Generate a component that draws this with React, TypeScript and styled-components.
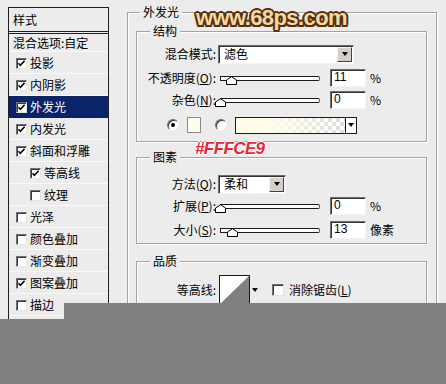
import React from 'react';
import styled, { createGlobalStyle } from 'styled-components';

const Global = createGlobalStyle`
  html, body { margin: 0; padding: 0; background: #ececec; }
  body {
    font-family: "Noto Sans CJK SC", "Noto Sans", "Liberation Sans", sans-serif;
    font-size: 12px;
    color: #000;
    overflow: hidden;
  }
`;

const Page = styled.div`
  position: relative;
  width: 446px;
  height: 384px;
  overflow: hidden;
  display: flex;
  align-items: flex-start;
  background: #ececec;
`;

/* ---------- left list ---------- */
const LeftPanel = styled.div`
  box-sizing: border-box;
  margin: 7px 0 0 8px;
  width: 101px;
  height: 330px;
  border: 1px solid #1e1e1e;
  border-bottom: none;
  display: flex;
  flex-direction: column;
`;

const Header = styled.div`
  height: 23px;
  padding-left: 4px;
  display: flex;
  align-items: center;
  border-bottom: 3px double #1e1e1e;
  line-height: 14px;
`;

const BlendRow = styled.div`
  height: 18px;
  padding-left: 4px;
  display: flex;
  align-items: center;
  line-height: 14px;
  box-shadow: inset 0 -1px 0 #f8f8f8;
`;

const Item = styled.div<{ $indent?: boolean; $selected?: boolean }>`
  height: 22px;
  display: flex;
  align-items: center;
  gap: 3px;
  padding-left: ${(p) => (p.$indent ? 21 : 7)}px;
  line-height: 14px;
  background: ${(p) => (p.$selected ? '#0a246a' : 'transparent')};
  color: ${(p) => (p.$selected ? '#fff' : '#000')};
  box-shadow: inset 0 -1px 0 ${(p) => (p.$selected ? '#0a246a' : '#f8f8f8')};
`;

const CheckBox = styled.span`
  box-sizing: border-box;
  width: 11px;
  height: 11px;
  flex-shrink: 0;
  background: #fff;
  border: 1px solid;
  border-color: #6e6e6e #e4e4e4 #e4e4e4 #6e6e6e;
  box-shadow: inset 1px 1px 0 #3a3a3a;
  display: flex;
  align-items: center;
  justify-content: center;
`;

const Check: React.FC<{ on: boolean }> = ({ on }) => (
  <CheckBox>
    {on && (
      <svg width="9" height="9" viewBox="0 0 9 9">
        <polyline points="1.5,4.2 3.4,6.4 7.6,1.8" fill="none" stroke="#000" strokeWidth="1.6" />
      </svg>
    )}
  </CheckBox>
);

/* ---------- right side ---------- */
const RightArea = styled.div`
  margin: 12px 0 0 18px;
`;

const Group = styled.div<{ $pad: string }>`
  position: relative;
  box-sizing: border-box;
  border: 1px solid #a3a3a3;
  box-shadow: inset 1px 1px 0 #fff, 1px 1px 0 #fff;
  padding: ${(p) => p.$pad};
  display: flex;
  flex-direction: column;
`;

const OuterGroup = styled(Group)`
  width: 310px;
  height: 310px;
  gap: 0;
`;

const Caption = styled.span<{ $left: number }>`
  position: absolute;
  top: -8px;
  left: ${(p) => p.$left}px;
  padding: 0 3px;
  line-height: 14px;
  background: #ececec;
`;

const Row = styled.div<{ $h: number; $mt: number; $pl?: number }>`
  display: flex;
  align-items: center;
  height: ${(p) => p.$h}px;
  margin-top: ${(p) => p.$mt}px;
  padding-left: ${(p) => p.$pl ?? 0}px;
`;

const Label = styled.span`
  width: 79px;
  flex-shrink: 0;
  margin-right: 2px;
  text-align: right;
  white-space: nowrap;
  line-height: 14px;
`;

const Select = styled.div<{ $w: number }>`
  box-sizing: border-box;
  width: ${(p) => p.$w}px;
  height: 19px;
  background: #fff;
  border: 1px solid;
  border-color: #6e6e6e #f4f4f4 #f4f4f4 #6e6e6e;
  box-shadow: inset 1px 1px 0 #333;
  display: flex;
  align-items: center;
  justify-content: space-between;
  padding: 1px 1px 1px 5px;
  line-height: 14px;
`;

const DropBtn = styled.span`
  box-sizing: border-box;
  width: 15px;
  height: 15px;
  background: #d4d0c8;
  border: 1px solid;
  border-color: #f4f4f4 #404040 #404040 #f4f4f4;
  display: flex;
  align-items: center;
  justify-content: center;
  &::after {
    content: '';
    border-left: 3.5px solid transparent;
    border-right: 3.5px solid transparent;
    border-top: 4px solid #000;
  }
`;

const Slider = styled.div`
  position: relative;
  width: 102px;
  height: 14px;
  display: flex;
  align-items: center;
`;

const Track = styled.div`
  box-sizing: border-box;
  margin-left: 2px;
  width: 100px;
  height: 5px;
  background: #fff;
  border: 1px solid #1a1a1a;
  border-right-color: #555;
  border-radius: 0 2px 2px 0;
`;

const Thumb = styled.svg`
  position: absolute;
  top: 5px;
`;

const Input = styled.div`
  box-sizing: border-box;
  margin-left: 10px;
  width: 36px;
  height: 18px;
  background: #fff;
  border: 1px solid;
  border-color: #6e6e6e #f4f4f4 #f4f4f4 #6e6e6e;
  box-shadow: inset 1px 1px 0 #333;
  padding-left: 3px;
  line-height: 15px;
  font-family: "Liberation Sans", "Noto Sans CJK SC", sans-serif;
`;

const Unit = styled.span`
  margin-left: 4px;
  line-height: 14px;
`;

const Radio = styled.span<{ $on?: boolean }>`
  box-sizing: border-box;
  width: 12px;
  height: 12px;
  border-radius: 50%;
  background: #fff;
  border: 1px solid;
  border-color: #6e6e6e #f4f4f4 #f4f4f4 #6e6e6e;
  box-shadow: inset 1px 1px 0 #333;
  display: flex;
  align-items: center;
  justify-content: center;
  &::after {
    content: '';
    width: 4px;
    height: 4px;
    border-radius: 50%;
    background: ${(p) => (p.$on ? '#000' : 'transparent')};
  }
`;

const Swatch = styled.span`
  box-sizing: border-box;
  margin-left: 8px;
  width: 14px;
  height: 16px;
  background: #fffce9;
  border: 1px solid #8a8a8a;
`;

const GradBox = styled.div`
  box-sizing: border-box;
  margin-left: 8px;
  width: 122px;
  height: 17px;
  border: 1px solid #1a1a1a;
  display: flex;
  background: #fff;
`;

const GradFill = styled.div`
  flex: 1;
  background:
    linear-gradient(to right, #fffce9 0%, #fffce9 30%, rgba(255, 252, 233, 0) 100%),
    conic-gradient(#dcdcdc 25%, #fff 0 50%, #dcdcdc 0 75%, #fff 0) 0 0 / 8px 8px;
`;

const GradArrow = styled.span`
  width: 10px;
  border-left: 1px solid #1a1a1a;
  background: #fff;
  display: flex;
  align-items: center;
  justify-content: center;
  &::after {
    content: '';
    border-left: 3px solid transparent;
    border-right: 3px solid transparent;
    border-top: 4px solid #000;
  }
`;

const Contour = styled.div`
  margin-left: 1px;
  display: flex;
  align-items: flex-start;
`;

const ContourArrow = styled.span`
  width: 9px;
  height: 30px;
  display: flex;
  align-items: center;
  justify-content: center;
  &::after {
    content: '';
    border-left: 3px solid transparent;
    border-right: 3px solid transparent;
    border-top: 4px solid #000;
  }
`;

const AntiAlias = styled.label`
  margin-left: 13px;
  display: flex;
  align-items: center;
  gap: 5px;
  line-height: 14px;
`;

const BigCheck = styled(CheckBox)`
  width: 12px;
  height: 12px;
`;

/* ---------- overlays ---------- */
const Watermark = styled.div`
  position: absolute;
  left: 196px;
  top: 5px;
  font-family: "Liberation Sans", Arial, sans-serif;
  font-weight: 700;
  font-size: 22px;
  letter-spacing: -0.6px;
  color: #f5d9a6;
  text-shadow:
    2px 0 0 #54300f, -2px 0 0 #54300f, 0 2px 0 #54300f, 0 -2px 0 #54300f,
    1.5px 1.5px 0 #54300f, -1.5px 1.5px 0 #54300f, 1.5px -1.5px 0 #54300f, -1.5px -1.5px 0 #54300f,
    0 0 3px #fff;
`;

const ColorTag = styled.div`
  position: absolute;
  left: 195px;
  top: 139px;
  font-family: "Liberation Sans", Arial, sans-serif;
  font-weight: 700;
  font-style: italic;
  font-size: 17px;
  letter-spacing: -0.6px;
  color: #e4283a;
  text-shadow: 1px 0 0 #fff, -1px 0 0 #fff, 0 1px 0 #fff, 0 -1px 0 #fff;
`;

const GrayCover = styled.div<{ $left: number; $top: number; $w?: number }>`
  position: absolute;
  left: ${(p) => p.$left}px;
  top: ${(p) => p.$top}px;
  ${(p) => (p.$w ? `width: ${p.$w}px;` : 'right: 0;')}
  bottom: 0;
  background: #808080;
`;

const SliderCtl: React.FC<{ value: number }> = ({ value }) => (
  <Slider>
    <Track />
    <Thumb width="11" height="9" viewBox="0 0 11 9" style={{ left: 2 + value - 5 }}>
      <path d="M0.5 8.5 V4 L5.5 0.7 L10.5 4 V8.5 Z" fill="#fff" stroke="#000" strokeWidth="1" />
    </Thumb>
  </Slider>
);

const items: { name: string; on: boolean; indent?: boolean; selected?: boolean }[] = [
  { name: '投影', on: true },
  { name: '内阴影', on: true },
  { name: '外发光', on: true, selected: true },
  { name: '内发光', on: true },
  { name: '斜面和浮雕', on: true },
  { name: '等高线', on: true, indent: true },
  { name: '纹理', on: false, indent: true },
  { name: '光泽', on: false },
  { name: '颜色叠加', on: false },
  { name: '渐变叠加', on: false },
  { name: '图案叠加', on: true },
  { name: '描边', on: false },
];

export default function App() {
  return (
    <Page>
      <Global />
      <LeftPanel>
        <Header>样式</Header>
        <BlendRow>混合选项:自定</BlendRow>
        {items.map((it) => (
          <Item key={it.name} $indent={it.indent} $selected={it.selected}>
            <Check on={it.on} />
            <span>{it.name}</span>
          </Item>
        ))}
      </LeftPanel>

      <RightArea>
        <OuterGroup $pad="18px 9px 0 8px">
          <Caption $left={12}>外发光</Caption>

          <Group $pad="12px 0 7px 0">
            <Caption $left={13}>结构</Caption>
            <Row $h={20} $mt={0}>
              <Label>混合模式:</Label>
              <Select $w={136}>
                <span>滤色</span>
                <DropBtn />
              </Select>
            </Row>
            <Row $h={20} $mt={4}>
              <Label>不透明度(<u>O</u>):</Label>
              <SliderCtl value={11} />
              <Input>11</Input>
              <Unit>%</Unit>
            </Row>
            <Row $h={20} $mt={2}>
              <Label>杂色(<u>N</u>):</Label>
              <SliderCtl value={0} />
              <Input>0</Input>
              <Unit>%</Unit>
            </Row>
            <Row $h={18} $mt={6} $pl={30}>
              <Radio $on />
              <Swatch />
              <Radio style={{ marginLeft: 14 }} />
              <GradBox>
                <GradFill />
                <GradArrow />
              </GradBox>
            </Row>
          </Group>

          <Group $pad="16px 0 3px 0" style={{ marginTop: 15 }}>
            <Caption $left={13}>图素</Caption>
            <Row $h={20} $mt={0}>
              <Label>方法(<u>Q</u>):</Label>
              <Select $w={68}>
                <span>柔和</span>
                <DropBtn />
              </Select>
            </Row>
            <Row $h={20} $mt={2}>
              <Label>扩展(<u>P</u>):</Label>
              <SliderCtl value={0} />
              <Input>0</Input>
              <Unit>%</Unit>
            </Row>
            <Row $h={20} $mt={4}>
              <Label>大小(<u>S</u>):</Label>
              <SliderCtl value={12} />
              <Input>13</Input>
              <Unit>像素</Unit>
            </Row>
          </Group>

          <Group $pad="13px 0 20px 0" style={{ marginTop: 17 }}>
            <Caption $left={13}>品质</Caption>
            <Row $h={30} $mt={0}>
              <Label>等高线:</Label>
              <Contour>
                <svg width="31" height="30" viewBox="0 0 31 30">
                  <rect x="0.5" y="0.5" width="30" height="29" fill="#fff" stroke="#1a1a1a" />
                  <polygon points="1,29 30,1 30,29" fill="#808080" />
                </svg>
                <ContourArrow />
              </Contour>
              <AntiAlias>
                <BigCheck />
                <span>消除锯齿(<u>L</u>)</span>
              </AntiAlias>
            </Row>
          </Group>
        </OuterGroup>
      </RightArea>

      <Watermark>www.68ps.com</Watermark>
      <ColorTag>#FFFCE9</ColorTag>
      <GrayCover $left={64} $top={303} />
      <GrayCover $left={0} $top={319} $w={64} />
    </Page>
  );
}
